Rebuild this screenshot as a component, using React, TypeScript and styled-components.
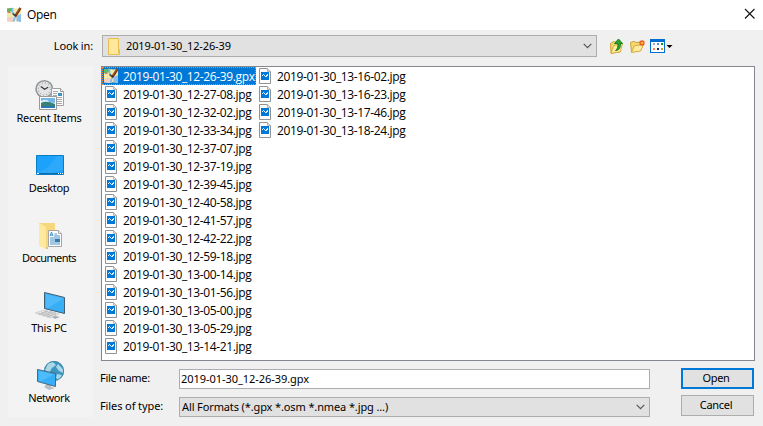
import React from "react";
import styled, { createGlobalStyle } from "styled-components";

const Global = createGlobalStyle`
  * { box-sizing: border-box; }
  body { margin: 0; overflow: hidden; background: #f0f0f0; }
  button { font: inherit; }
  svg { flex: none; }
`;

const Dialog = styled.div`
  width: 763px;
  height: 426px;
  display: flex;
  flex-direction: column;
  background: #f0f0f0;
  color: #000;
  font: 11px/14px "Noto Sans", "Open Sans", sans-serif;
  white-space: nowrap;
`;

const TitleBar = styled.header`
  height: 30px;
  padding: 0 7px;
  display: flex;
  align-items: center;
  background: #fff;
  font: 12px/16px "Open Sans", "Noto Sans", sans-serif;
  letter-spacing: -0.3px;
`;

const Title = styled.span`
  flex: 1;
  margin-left: 5px;
`;

const CloseButton = styled.button`
  width: 12px;
  height: 12px;
  margin-top: -2px;
  padding: 0;
  border: 0;
  background: none;
  display: flex;
`;

const LookRow = styled.div`
  height: 36px;
  padding-top: 5px;
  display: flex;
  align-items: flex-start;
`;

const LookLabel = styled.label`
  width: 102px;
  padding: 4px 9px 0 0;
  text-align: right;
  letter-spacing: -0.15px;
`;

const Combo = styled.div<{ $width: number; $height: number }>`
  width: ${(p) => p.$width}px;
  height: ${(p) => p.$height}px;
  padding: 0 4px 0 4px;
  display: flex;
  align-items: center;
  background: #e1e1e1;
  border: 1px solid #adadad;
`;

const ComboText = styled.span<{ $gap: number; $spacing: number }>`
  flex: 1;
  margin-left: ${(p) => p.$gap}px;
  letter-spacing: ${(p) => p.$spacing}px;
`;

const Tools = styled.div`
  margin: 3px 0 0 12px;
  display: flex;
  gap: 4px;
`;

const Body = styled.main`
  flex: 1;
  display: flex;
  padding-left: 8px;
`;

const Places = styled.nav`
  width: 85px;
  height: 351px;
  padding: 12px 1px 0 0;
  background: #f3f3f3;
`;

const Place = styled.div`
  height: 70px;
  display: flex;
  flex-direction: column;
  align-items: center;
`;

const PlaceName = styled.span<{ $spacing: number }>`
  margin-top: 1px;
  margin-left: -2px;
  letter-spacing: ${(p) => p.$spacing}px;
`;

const Content = styled.section`
  width: 654px;
  margin-left: 8px;
`;

const FileList = styled.div`
  height: 295px;
  display: flex;
  align-items: flex-start;
  background: #fff;
  border: 1px solid #828790;
`;

const FileColumn = styled.div`
  width: 154px;
`;

const FileRow = styled.div<{ $selected?: boolean }>`
  height: 18px;
  width: 154px;
  padding-left: ${(p) => (p.$selected ? 1 : 2)}px;
  display: flex;
  align-items: center;
  font: 12px/16px "Open Sans", "Noto Sans", sans-serif;
  letter-spacing: -0.37px;
  color: ${(p) => (p.$selected ? "#fff" : "#000")};
  background: ${(p) => (p.$selected ? "#0078d7" : "transparent")};
  border: ${(p) => (p.$selected ? "1px dotted #ff8728" : "0")};
`;

const FileIcon = styled.span`
  width: 19px;
  height: 16px;
  display: flex;
`;

const FileName = styled.span`
  margin-top: 2px;
`;

const Fields = styled.div`
  display: grid;
  grid-template-columns: 78px 502px 73px;
  grid-template-rows: 28px 28px;
  margin-top: 7px;
`;

const FieldLabel = styled.label<{ $spacing: number }>`
  margin: 3px 0 0 -1px;
  letter-spacing: ${(p) => p.$spacing}px;
`;

const NameField = styled.div`
  width: 471px;
  height: 20px;
  margin-top: 1px;
  padding: 2px 1px;
  background: #fff;
  border: 1px solid #abadb3;
  letter-spacing: -0.05px;
`;

const FilterSlot = styled.div`
  margin-top: 1px;
`;

const PushButton = styled.button<{ $primary?: boolean }>`
  height: 21px;
  margin-top: ${(p) => (p.$primary ? 0 : -1)}px;
  padding: 0 3px 2px 0;
  color: #000;
  background: #e1e1e1;
  border: ${(p) => (p.$primary ? "2px solid #0078d7" : "1px solid #adadad")};
  line-height: 14px;
  letter-spacing: -0.3px;
`;

const AppIcon = () => (
  <svg width="15" height="16" viewBox="0 0 15 16">
    <path d="M0 1.5 5 .8l4 .8 5-.6V15l-5-.7-4 .7-5-.7z" fill="#f3eaa6" />
    <path d="M0 1.5 5 .8v3.4L0 5.5z" fill="#5fb865" />
    <path d="m0 11 5-1.5 3 2v2.8l-3 .7-5-.7z" fill="#f1cfc4" />
    <path d="M9.5 9 14 7v8l-4.5-.7z" fill="#8fbcf0" />
    <path d="M5.5 1v4l3 4-2 5.5" stroke="#7ebdf0" strokeWidth="1.6" fill="none" />
    <path d="m1 5 2.5.5" stroke="#e2574e" strokeWidth="1.2" fill="none" />
    <path d="M13.5 1 8.4 9" stroke="#7c3414" strokeWidth="2.4" />
    <path d="m13 1-3.8 6" stroke="#ad602f" strokeWidth=".8" />
    <path d="M5.5 6.5 9 9.5" stroke="#333" strokeWidth="1.2" />
  </svg>
);

const CloseIcon = () => (
  <svg width="12" height="12" viewBox="0 0 12 12">
    <path d="m1 1 9.5 9.5m0-9.5L1 10.5" stroke="#111" strokeWidth="1.1" />
  </svg>
);

const Chevron = () => (
  <svg width="9" height="6" viewBox="0 0 9 6">
    <path d="m.7.9 3.8 3.8L8.3.9" fill="none" stroke="#555" strokeWidth="1.2" />
  </svg>
);

const FolderIcon = () => (
  <svg width="14" height="17" viewBox="0 0 14 17">
    <path d="M1.5.5h10v11h1v5h-11z" fill="#ffe79b" stroke="#e9be50" />
    <path d="M11.5 11.5v4" stroke="#e9be50" />
  </svg>
);

const PictureIcon = () => (
  <svg width="14" height="16" viewBox="0 0 14 16">
    <path d="M1.5.5h8l3 3v12h-11z" fill="#fcfcfc" stroke="#929292" />
    <path d="M9.5.5v3h3" fill="#ddd" stroke="#aaa" strokeWidth=".8" />
    <path d="M3 4h8v8H3z" fill="#0078d7" />
    <path d="M4 7h1v1H4zM5 6h1v1H5zM6 7h1v1H6zM7 8h1v1H7zM8 7h1v2H8zM9 6h1v2H9z" fill="#d8ecfc" />
  </svg>
);

const UpFolderIcon = () => (
  <svg width="17" height="16" viewBox="0 0 17 16">
    <path d="M1.5 5.5 5 3.3l1 1 5-1.5v11l-9 1.5z" fill="#f4d873" stroke="#cfa437" />
    <path d="m4.5 7.5 9-2-2.2 8.4-9.3 1.4z" fill="#ffeb9b" stroke="#d7ad3c" />
    <path d="M6.5 12.5c2-1 2.7-4 2.3-7H5.5L9.5 1l4 4.5h-2c.1 4-1.2 7-5 7z" fill="#29a72d" stroke="#14751b" strokeWidth=".9" />
  </svg>
);

const NewFolderIcon = () => (
  <svg width="16" height="16" viewBox="0 0 16 16">
    <path d="M.5 4.5 4 3.3l2 1.2 5-.5v8L1.5 14z" fill="#f4d873" stroke="#cfa437" />
    <path d="m4.3 7.7 9.2-1.2-3 6.6-9 1.3z" fill="#ffeb9b" stroke="#d7ad3c" />
    <path d="M12 2v6M9 5h6M9.8 2.8l4.4 4.4m0-4.4L9.8 7.2" stroke="#e64d17" strokeWidth="1.2" />
    <circle cx="12" cy="5" r="1.3" fill="#ffb043" />
  </svg>
);

const ViewIcon = () => (
  <svg width="23" height="16" viewBox="0 0 23 16">
    <path d="M0 1h15v14H0z" fill="#006fd1" />
    <path d="M1 4h13v10H1z" fill="#fff" />
    <path d="M3 5h2v2H3z" fill="#aaa6bf" />
    <path d="M7 5h2v2H7z" fill="#5691d7" />
    <path d="M11 5h2v2h-2z" fill="#16991d" />
    <path d="M3 10h2v2H3z" fill="#f2865d" />
    <path d="M7 10h2v2H7z" fill="#122a72" />
    <path d="M11 10h2v2h-2z" fill="#d59b18" />
    <path d="M16.5 7h6l-3 3z" fill="#000" />
  </svg>
);

const RecentIcon = () => (
  <svg width="32" height="32" viewBox="0 0 32 32">
    <circle cx="10.3" cy="11" r="8.3" fill="#e2e4e5" stroke="#92989b" strokeWidth="1.6" />
    <circle cx="10.3" cy="11" r="6" fill="none" stroke="#777" strokeWidth="1" strokeDasharray=".8 2.34" />
    <path d="m6.8 8.5 3.8 2.7 3.5-2" fill="none" stroke="#333" strokeWidth="1.2" />
    <path d="M17.5 10.5h9l3 3v14h-12z" fill="#fbfbfb" stroke="#a0a0a0" />
    <path d="M26.5 10.5v3h3" fill="#eee" stroke="#999" />
    <path d="M19 13.5h5m-5 2h4m-4 2h4m-4 2h9m-9 2h9m-5 2h5m-5 2h5" stroke="#aaa" />
    <path d="M24 15h4v3h-4z" fill="#3991c4" />
    <path d="M5.5 18.5h17v13h-17z" fill="#fff" stroke="#999" />
    <path d="M7 20h14v10H7z" fill="#71b6e9" />
    <path d="M7 23q6-3 8 1l6 1v5H7z" fill="#d9effb" />
    <path d="M7 25q5-3 14 1v2H7z" fill="#397f73" />
    <path d="M7 28h14v2H7z" fill="#2878b3" />
  </svg>
);

const DesktopIcon = () => (
  <svg width="32" height="32" viewBox="0 0 32 32">
    <path d="M2.5 7.5h27v19h-27z" fill="#1ca2fb" stroke="#087dc4" />
    <path d="M23 8h6v14L13 26H3v-2C12 23 17 16 23 8z" fill="#48b3ff" opacity=".4" />
    <path d="M3 25h26v1H3z" fill="#096ca8" />
    <path d="M3 25.5h2m19 0h1m1 0h1m1 0h1" stroke="#fff" />
  </svg>
);

const DocumentsIcon = () => (
  <svg width="32" height="32" viewBox="0 0 32 32">
    <path d="M5 5h16v23H5z" fill="#f5d77d" />
    <path d="m5 5 7 4v22l-7-3z" fill="#ffe99f" />
    <path d="M14.5 12.5h10l3 3v13h-13z" fill="#fff" stroke="#a5a5a5" />
    <path d="M24.5 12.5v3h3" fill="#eee" stroke="#aaa" />
    <path d="m16 18 1.5-4 1.5 4m-2.5-1H19m1.5-1H23m-3 2h6m-10 2h10m-10 2h5m-5 2h10m-10 2h10" fill="none" stroke="#438ec5" />
    <path d="M21 21h5v3h-5z" fill="#357ca9" />
    <path d="m12 28 2 1v2h-2z" fill="#dfc46e" />
  </svg>
);

const PcIcon = () => (
  <svg width="32" height="32" viewBox="0 0 32 32">
    <path d="m16 23 6 2v3l4 1-5 2-5-3z" fill="#a8b0b7" />
    <path d="m10.5 4.5 20 5v16l-20-5z" fill="#38aef6" stroke="#425f70" />
    <path d="m12 6 17.5 4.5L14 20l-2-.5z" fill="#60c5ff" opacity=".55" />
    <path d="m1 25 9-3 15 4-9 4z" fill="#e5e7e8" stroke="#c2c4c6" strokeWidth=".6" />
    <path d="m4 25 13 4m-10-5 12 4m-9-5 12 4M5 27l9-4m-5 5 9-4m-5 5 9-4" stroke="#b1b3b5" strokeWidth=".7" />
  </svg>
);

const NetworkIcon = () => (
  <svg width="32" height="32" viewBox="0 0 32 32">
    <circle cx="20" cy="13" r="10" fill="#3e96bf" />
    <path d="m14 5 5-1 3 3-4 3-3 5-4-3zm10 1 5 5v4l-4-2-3-4zm-1 10 5 1-3 5-3-2z" fill="#a9d7e7" />
    <circle cx="20" cy="13" r="9.6" fill="none" stroke="#3982a4" strokeWidth=".8" />
    <path d="m12 24 5 2v3l4 1-6 2-5-3 2-2z" fill="#b7bfc5" />
    <path d="m3.5 11.5 18 4v13l-18-5z" fill="#37aff8" stroke="#496b80" />
    <path d="m5 13 15 3.5L7 23l-2-.5z" fill="#61c5ff" opacity=".55" />
  </svg>
);

const places = [
  { name: "Recent Items", Icon: RecentIcon, spacing: -0.2 },
  { name: "Desktop", Icon: DesktopIcon, spacing: -0.3 },
  { name: "Documents", Icon: DocumentsIcon, spacing: -0.6 },
  { name: "This PC", Icon: PcIcon, spacing: -0.3 },
  { name: "Network", Icon: NetworkIcon, spacing: -0.4 },
];

const columns = [
  [
    "12-26-39.gpx", "12-27-08.jpg", "12-32-02.jpg", "12-33-34.jpg",
    "12-37-07.jpg", "12-37-19.jpg", "12-39-45.jpg", "12-40-58.jpg",
    "12-41-57.jpg", "12-42-22.jpg", "12-59-18.jpg", "13-00-14.jpg",
    "13-01-56.jpg", "13-05-00.jpg", "13-05-29.jpg", "13-14-21.jpg",
  ],
  ["13-16-02.jpg", "13-16-23.jpg", "13-17-46.jpg", "13-18-24.jpg"],
];

export default function App() {
  return (
    <Dialog>
      <Global />
      <TitleBar>
        <AppIcon />
        <Title>Open</Title>
        <CloseButton aria-label="Close"><CloseIcon /></CloseButton>
      </TitleBar>
      <LookRow>
        <LookLabel>Look in:</LookLabel>
        <Combo $width={495} $height={22}>
          <FolderIcon />
          <ComboText $gap={5} $spacing={-0.12}>2019-01-30_12-26-39</ComboText>
          <Chevron />
        </Combo>
        <Tools><UpFolderIcon /><NewFolderIcon /><ViewIcon /></Tools>
      </LookRow>
      <Body>
        <Places>
          {places.map(({ name, Icon, spacing }) => (
            <Place key={name}>
              <Icon />
              <PlaceName $spacing={spacing}>{name}</PlaceName>
            </Place>
          ))}
        </Places>
        <Content>
          <FileList>
            {columns.map((files, i) => (
              <FileColumn key={i}>
                {files.map((file) => {
                  const selected = file.endsWith("gpx");
                  return (
                    <FileRow key={file} $selected={selected}>
                      <FileIcon>{selected ? <AppIcon /> : <PictureIcon />}</FileIcon>
                      <FileName>2019-01-30_{file}</FileName>
                    </FileRow>
                  );
                })}
              </FileColumn>
            ))}
          </FileList>
          <Fields>
            <FieldLabel $spacing={-0.3}>File name:</FieldLabel>
            <NameField>2019-01-30_12-26-39.gpx</NameField>
            <PushButton $primary>Open</PushButton>
            <FieldLabel $spacing={-0.1}>Files of type:</FieldLabel>
            <FilterSlot>
              <Combo $width={471} $height={20}>
                <ComboText $gap={-2} $spacing={-0.12}>All Formats (*.gpx *.osm *.nmea *.jpg ...)</ComboText>
                <Chevron />
              </Combo>
            </FilterSlot>
            <PushButton>Cancel</PushButton>
          </Fields>
        </Content>
      </Body>
    </Dialog>
  );
}
